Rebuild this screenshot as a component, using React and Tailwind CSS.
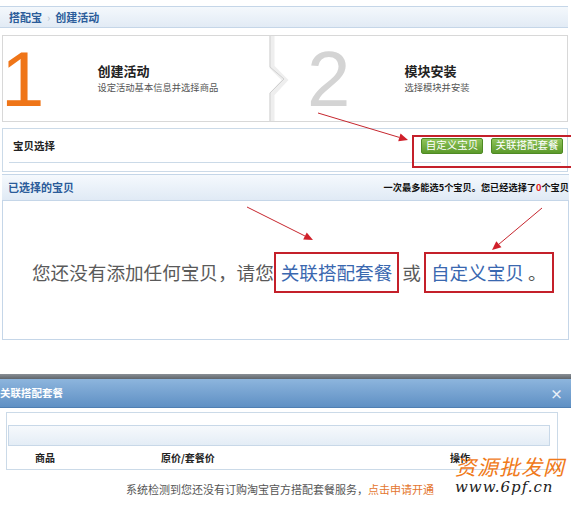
import React from "react";

const cjk = "font-['Noto_Sans_CJK_SC','Noto_Sans',sans-serif]";

const Arrow = ({ x1, y1, x2, y2 }) => {
  const a = Math.atan2(y2 - y1, x2 - x1);
  const l = 9;
  const w = 4;
  const bx = x2 - l * Math.cos(a);
  const by = y2 - l * Math.sin(a);
  const p1 = `${bx + w * Math.sin(a)},${by - w * Math.cos(a)}`;
  const p2 = `${bx - w * Math.sin(a)},${by + w * Math.cos(a)}`;
  return (
    <g>
      <line x1={x1} y1={y1} x2={bx} y2={by} stroke="#c6262e" strokeWidth="1" />
      <polygon points={`${x2},${y2} ${p1} ${p2}`} fill="#d0202a" />
    </g>
  );
};

const GreenButton = ({ children, className }) => (
  <div
    className={`h-[16px] flex items-center justify-center rounded-[2px] border border-[#4e8a24] bg-gradient-to-b from-[#8fc45a] to-[#5c9a2a] text-white text-[10.5px] leading-none ${className}`}
  >
    {children}
  </div>
);

export default function App() {
  return (
    <div className={`relative w-[571px] h-[513px] overflow-hidden bg-white ${cjk}`}>
      {/* breadcrumb */}
      <div className="pt-[6px]">
        <div className="h-[22px] mr-[3px] border-y border-[#c5d6e8] bg-gradient-to-b from-[#f4f8fc] to-[#e2ebf5] flex items-center pl-[9px] text-[11px] font-bold text-[#2b5c9a]">
          <span>搭配宝</span>
          <span className="mx-[5px] text-[#b8c4d0] font-normal">›</span>
          <span>创建活动</span>
        </div>
      </div>

      {/* steps */}
      <div className="mt-[7px] ml-[2px] w-[566px] h-[87px] border border-[#d8d8d8] flex">
        <div className="w-[266px] flex items-center">
          <span className="ml-[-2px] font-['Liberation_Sans',sans-serif] text-[78px] leading-none text-[#ef7518]">1</span>
          <div className="ml-[53px] mb-[3px] flex flex-col">
            <span className="text-[13px] leading-[19px] text-[#222] font-bold">创建活动</span>
            <span className="text-[9.3px] leading-[14px] text-[#555]">设定活动基本信息并选择商品</span>
          </div>
        </div>
        <svg width="20" height="85" className="shrink-0">
          <polyline points="3,0 3,31 16,44 3,58 3,85" fill="none" stroke="#eeeeee" strokeWidth="5" />
          <polyline points="1,0 1,31 15,43 1,57 1,85" fill="none" stroke="#d0d0d0" strokeWidth="1" />
        </svg>
        <div className="flex-1 flex items-center">
          <span className="ml-[18px] font-['Liberation_Sans',sans-serif] text-[78px] leading-none text-[#d4d4d4]">2</span>
          <div className="ml-[54px] mb-[3px] flex flex-col">
            <span className="text-[13px] leading-[19px] text-[#222] font-bold">模块安装</span>
            <span className="text-[9.3px] leading-[14px] text-[#555]">选择模块并安装</span>
          </div>
        </div>
      </div>

      {/* 宝贝选择 */}
      <div className="mt-[6px] ml-[2px] w-[566px] h-[44px] border border-[#cbdae8] px-[6px]">
        <div className="h-[34px] border-b border-[#cbdae8] flex items-center justify-between">
          <span className="ml-[4px] text-[10.5px] font-bold text-[#222]">宝贝选择</span>
          <div className="flex items-center gap-[8px] mr-[-2px]">
            <GreenButton className="w-[62px]">自定义宝贝</GreenButton>
            <GreenButton className="w-[72px]">关联搭配套餐</GreenButton>
          </div>
        </div>
      </div>

      {/* 已选择的宝贝 */}
      <div className="mt-[2px] ml-[2px] w-[567px] h-[27px] border-y border-[#c5d6e8] bg-gradient-to-b from-[#f5f9fd] to-[#e0eaf5] flex items-center justify-between px-[6px]">
        <span className="text-[11px] font-bold text-[#2b5c9a]">已选择的宝贝</span>
        <span className="text-[9.2px] font-bold text-[#111] mr-[-6px]">
          一次最多能选5个宝贝。您已经选择了<span className="text-[#e02020]">0</span>个宝贝
        </span>
      </div>
      <div className="ml-[2px] w-[567px] h-[139px] border-x border-b border-[#c5d6e8] flex items-center pl-[29px] pt-[4px] text-[18.6px] text-[#5a5a5a]">
        <span>您还没有添加任何宝贝，请您</span>
        <span className="h-[41px] px-[5px] flex items-center border-2 border-[#c4202a] text-[#3a68b0]">关联搭配套餐</span>
        <span className="mx-[3px]">或</span>
        <span className="h-[41px] px-[5px] flex items-center border-2 border-[#c4202a] text-[#3a68b0]">
          自定义宝贝<span className="ml-[4px] text-[#555]">。</span>
        </span>
      </div>

      {/* dialog */}
      <div className="mt-[34px]">
        <div className="h-[5px] bg-gradient-to-b from-[#8a9096] to-[#60666c]" />
        <div className="h-[29px] bg-gradient-to-b from-[#8db5dd] to-[#5f90c4] border-b border-[#4f7fb2] flex items-center justify-between pr-[8px]">
          <span className="text-[10.5px] font-bold text-white">关联搭配套餐</span>
          <span className="text-[13px] font-bold text-[#e8f0f8] leading-none">×</span>
        </div>
        <div className="mt-[4px] ml-[6px] w-[552px] h-[58px] border border-[#cbdae8] px-[1px] pt-[12px]">
          <div className="w-[542px] h-[21px] border border-[#c8d8e8] bg-gradient-to-b from-[#f6f9fc] to-[#e4edf6]" />
          <div className="h-[22px] flex items-center text-[10px] font-bold text-[#222]">
            <span className="ml-[27px] w-[126px]">商品</span>
            <span className="w-[289px]">原价/套餐价</span>
            <span>操作</span>
          </div>
        </div>
        <div className="mt-[11px] pl-[126px] text-[11px] text-[#555]">
          系统检测到您还没有订购淘宝官方搭配套餐服务，<span className="text-[#e4762e]">点击申请开通</span>
        </div>
      </div>

      {/* annotations */}
      <svg className="absolute inset-0 pointer-events-none" width="571" height="513">
        <rect x="413" y="136" width="170" height="31" fill="none" stroke="#c4202a" strokeWidth="2" />
        <Arrow x1={318} y1={113} x2={408} y2={140} />
        <Arrow x1={247} y1={207} x2={313} y2={240} />
        <Arrow x1={542} y1={208} x2={492} y2={250} />
      </svg>

      {/* watermark */}
      <div className="absolute left-[455px] top-[454px] flex flex-col items-start pointer-events-none">
        <span className="text-[21px] leading-[24px] italic text-[#f07a1a] tracking-[1px]">资源批发网</span>
        <span className="font-['DejaVu_Serif',serif] italic text-[15px] leading-[18px] text-[#222] tracking-[1px]">www.6pf.cn</span>
      </div>
    </div>
  );
}
